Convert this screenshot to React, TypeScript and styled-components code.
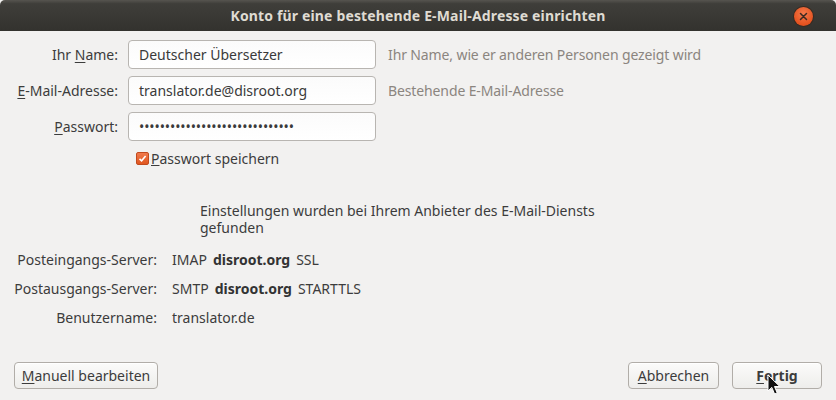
import styled, { createGlobalStyle } from "styled-components";

const Global = createGlobalStyle`
  html, body {
    margin: 0;
    padding: 0;
    background: #f2f1f0;
  }
  body {
    font-family: "Noto Sans", "DejaVu Sans", sans-serif;
    font-size: 14px;
    color: #3c3c3c;
  }
`;

const Window = styled.div`
  width: 836px;
  height: 400px;
  background: #f2f1f0;
  display: flex;
  flex-direction: column;
  overflow: hidden;
`;

const TitleBar = styled.div`
  height: 31px;
  flex: none;
  position: relative;
  display: flex;
  align-items: center;
  justify-content: center;
  background: linear-gradient(#56544f 0%, #3f3e3a 12%, #33322e 100%);
  border-radius: 5px 5px 0 0;
  color: #dfdbd2;
  font-weight: bold;
  font-size: 14px;
  letter-spacing: 0.15px;
`;

const CloseButton = styled.div`
  position: absolute;
  right: 23px;
  top: 7px;
  width: 19px;
  height: 19px;
  border-radius: 50%;
  background: radial-gradient(circle at 50% 35%, #f57a4c, #e5521f 70%, #c6431a);
  box-shadow: 0 0 0 1px #3a2a20;
  display: flex;
  align-items: center;
  justify-content: center;
`;

const Body = styled.div`
  flex: 1;
  display: flex;
  flex-direction: column;
  padding: 9px 14px 11px 14px;
`;

const FormGrid = styled.div`
  display: grid;
  grid-template-columns: 104px 248px auto;
  column-gap: 10px;
  row-gap: 7px;
  align-items: center;
`;

const Label = styled.label`
  text-align: right;
  color: #3c3c3c;
  white-space: nowrap;
  & u {
    text-decoration-thickness: 1px;
    text-underline-offset: 2px;
  }
`;

const Input = styled.div<{ $dots?: boolean }>`
  height: 29px;
  box-sizing: border-box;
  border: 1px solid #b8b5b1;
  border-radius: 4px;
  background: linear-gradient(#fbfbfb, #ffffff);
  display: flex;
  align-items: center;
  padding: 0 10px;
  color: #3a3a3a;
  font-size: 14px;
  letter-spacing: ${(p) => (p.$dots ? "-0.1px" : "0")};
  white-space: nowrap;
  overflow: hidden;
`;

const Hint = styled.span`
  color: #8b857f;
  padding-left: 2px;
  white-space: nowrap;
  letter-spacing: -0.12px;
`;

const CheckRow = styled.div`
  display: flex;
  align-items: center;
  gap: 2px;
  margin-left: 122px;
  margin-top: 8px;
`;

const Check = styled.span`
  width: 13px;
  height: 13px;
  border-radius: 2px;
  background: linear-gradient(#f07a4d, #e0561f);
  border: 1px solid #c24a1d;
  box-sizing: border-box;
  display: flex;
  align-items: center;
  justify-content: center;
`;

const Found = styled.div`
  margin: 34px 0 0 186px;
  width: 420px;
  line-height: 17px;
`;

const ServerGrid = styled.div`
  display: grid;
  grid-template-columns: 143px auto;
  column-gap: 15px;
  row-gap: 10px;
  margin-top: 14px;
  line-height: 19px;
`;

const ServerLabel = styled.span`
  text-align: right;
  white-space: nowrap;
`;

const ServerValue = styled.span`
  display: flex;
  gap: 6px;
  white-space: nowrap;
  & b {
    color: #333;
  }
`;

const Footer = styled.div`
  margin-top: auto;
  display: flex;
  align-items: center;
`;

const Spacer = styled.div`
  flex: 1;
`;

const Button = styled.button<{ $default?: boolean; $w: number }>`
  position: relative;
  width: ${(p) => p.$w}px;
  height: 27px;
  box-sizing: border-box;
  border: 1px solid #b1ada8;
  border-radius: 4px;
  background: linear-gradient(#fbfbfa, #eeedeb);
  box-shadow: inset 0 1px 0 #ffffff;
  font-family: inherit;
  font-size: 14px;
  font-weight: ${(p) => (p.$default ? "bold" : "normal")};
  color: #3c3c3c;
  padding: 0;
  margin-left: ${(p) => (p.$default ? "13px" : "0")};
  & u {
    text-underline-offset: 2px;
  }
`;

const Cursor = styled.svg`
  position: absolute;
  left: 34px;
  top: 11px;
`;

export default function App() {
  return (
    <>
      <Global />
      <Window>
        <TitleBar>
          Konto für eine bestehende E-Mail-Adresse einrichten
          <CloseButton>
            <svg width="9" height="9" viewBox="0 0 9 9">
              <path d="M1.5 1.5 L7.5 7.5 M7.5 1.5 L1.5 7.5" stroke="#3b2a22" strokeWidth="1.5" strokeLinecap="round" />
            </svg>
          </CloseButton>
        </TitleBar>
        <Body>
          <FormGrid>
            <Label>
              Ihr <u>N</u>ame:
            </Label>
            <Input>Deutscher Übersetzer</Input>
            <Hint>Ihr Name, wie er anderen Personen gezeigt wird</Hint>
            <Label>
              <u>E</u>-Mail-Adresse:
            </Label>
            <Input>translator.de@disroot.org</Input>
            <Hint>Bestehende E-Mail-Adresse</Hint>
            <Label>
              <u>P</u>asswort:
            </Label>
            <Input $dots>{"•".repeat(30)}</Input>
            <span />
          </FormGrid>
          <CheckRow>
            <Check>
              <svg width="9" height="9" viewBox="0 0 9 9">
                <path d="M1.5 4.8 L3.6 6.8 L7.6 2" stroke="#fff" strokeWidth="1.6" fill="none" />
              </svg>
            </Check>
            <span>
              <u>P</u>asswort speichern
            </span>
          </CheckRow>
          <Found>Einstellungen wurden bei Ihrem Anbieter des E-Mail-Diensts gefunden</Found>
          <ServerGrid>
            <ServerLabel>Posteingangs-Server:</ServerLabel>
            <ServerValue>
              <span>IMAP</span>
              <b>disroot.org</b>
              <span>SSL</span>
            </ServerValue>
            <ServerLabel>Postausgangs-Server:</ServerLabel>
            <ServerValue>
              <span>SMTP</span>
              <b>disroot.org</b>
              <span>STARTTLS</span>
            </ServerValue>
            <ServerLabel>Benutzername:</ServerLabel>
            <ServerValue>
              <span>translator.de</span>
            </ServerValue>
          </ServerGrid>
          <Footer>
            <Button $w={144}>
              <u>M</u>anuell bearbeiten
            </Button>
            <Spacer />
            <Button $w={91}>
              <u>A</u>bbrechen
            </Button>
            <Button $w={90} $default>
              <u>F</u>ertig
              <Cursor width="15" height="22" viewBox="0 0 15 22">
                <path d="M1 1 L1 17 L4.8 13.4 L7.6 20 L10.2 18.9 L7.5 12.5 L12.8 12.5 Z" fill="#111" stroke="#fff" strokeWidth="1" />
              </Cursor>
            </Button>
          </Footer>
        </Body>
      </Window>
    </>
  );
}
